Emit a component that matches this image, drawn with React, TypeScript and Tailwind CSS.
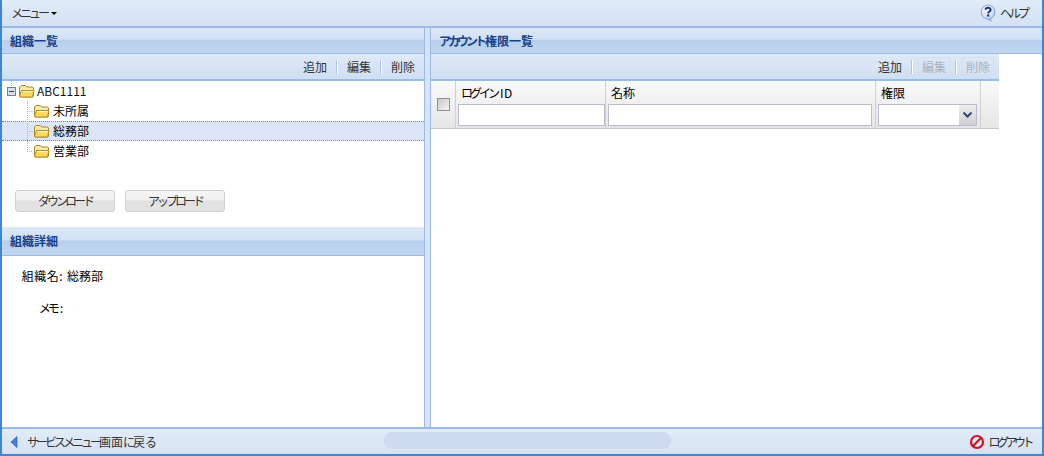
const font = { fontFamily: '"Noto Sans CJK JP", "Liberation Sans", sans-serif' };

function K({ children }: { children: string }) {
  return <span className="tracking-[-3px]">{children}</span>;
}

function Folder() {
  return (
    <svg width="17" height="14" viewBox="0 0 17 14" className="shrink-0">
      <path d="M1.5 12.5 V3 L3 1.5 H7.5 L9 3 H14.5 L15.5 4 V12 L14.5 13 H2 Z" fill="#f7e9a8" stroke="#a8862a" />
      <path d="M1.5 12.5 L3.5 6.5 H16 L14.5 13 H2 Z" fill="#fbd95c" stroke="#b08f2c" />
      <path d="M4.5 7.5 H14.5" stroke="#fff6c4" />
    </svg>
  );
}

function Head({ children, h = "h-[26px]" }: { children: React.ReactNode; h?: string }) {
  return (
    <div className={`${h} shrink-0 flex items-center pl-2 border-b border-[#99bbe8] bg-[linear-gradient(#dbe7f6_0%,#d2e1f4_45%,#b7cfec_50%,#c3d6ef_100%)]`}>
      <span className="text-[12px] font-bold text-[#15428b] leading-none">{children}</span>
    </div>
  );
}

function Tool({ label, disabled }: { label: string; disabled?: boolean }) {
  return (
    <span className={`text-[12px] leading-none ${disabled ? "text-[#aab2bd] outline outline-[#d3dfee] outline-offset-[3px]" : "text-[#333]"}`}>
      {label}
    </span>
  );
}

function Toolbar({ disabled }: { disabled?: boolean }) {
  const sep = <span className="w-px h-[14px] bg-[#a9c5ea] border-r border-white box-content" />;
  return (
    <div className="h-[27px] shrink-0 flex items-center justify-end gap-[9px] pr-[9px] border-b-2 border-[#99bbe8] bg-[linear-gradient(#dfe9f6,#cfdff3)]">
      <Tool label="追加" />
      {sep}
      <Tool label="編集" disabled={disabled} />
      {sep}
      <Tool label="削除" disabled={disabled} />
    </div>
  );
}

function TreeRow({ label, selected, last }: { label: string; selected?: boolean; last?: boolean }) {
  return (
    <div className={`h-[20px] flex items-center ${selected ? "bg-[#dce6f6] border-y border-dotted border-[#7d8796]" : ""}`}>
      <svg width="31" height="20" viewBox="0 0 31 20" className="shrink-0">
        <path d={last ? "M25.5 0 V10.5 H31" : "M25.5 0 V20 M25.5 10.5 H31"} stroke="#b5b5b5" strokeDasharray="1 1" fill="none" />
      </svg>
      <Folder />
      <span className="ml-[3px] text-[12px] text-black leading-none">{label}</span>
    </div>
  );
}

function Btn({ label }: { label: string }) {
  return (
    <div className="w-[100px] h-[22px] flex items-center justify-center rounded-[3px] border border-[#d0d0d0] text-[12px] text-[#333] bg-[linear-gradient(#f5f5f5_0%,#f0f0f0_45%,#e1e1e1_50%,#e3e3e3_100%)]">
      <K>{label}</K>
    </div>
  );
}

function FilterInput({ className }: { className: string }) {
  return <div className={`h-[22px] bg-white border border-[#b8bccb] ${className}`} />;
}

export default function App() {
  return (
    <div style={font} className="w-[1044px] h-[456px] flex flex-col overflow-hidden bg-white border-x-2 border-[#3c86d6]">
      <div className="h-[28px] shrink-0 flex items-center justify-between pl-2 pr-[15px] border-b-2 border-[#99bbe8] bg-[linear-gradient(#e1ebf8,#d4e1f3)]">
        <div className="flex items-center gap-[4px]">
          <span className="text-[12px] text-[#333] leading-none pl-[1px]"><K>メニュー</K></span>
          <span className="w-0 h-0 border-x-[3px] border-x-transparent border-t-[3px] border-t-black" />
        </div>
        <div className="flex items-center gap-[4px]">
          <svg width="16" height="18" viewBox="0 0 16 18">
            <defs>
              <radialGradient id="help" cx="0.4" cy="0.3" r="0.8">
                <stop offset="0" stopColor="#ffffff" />
                <stop offset="0.6" stopColor="#cfe0f7" />
                <stop offset="1" stopColor="#6f9ad8" />
              </radialGradient>
            </defs>
            <path d="M8 1 A7 7 0 0 1 10 14.7 L11.5 17 L7 14.9 A7 7 0 0 1 8 1 Z" fill="url(#help)" stroke="#86a6d4" />
            <path d="M5.6 5.8 C5.6 3 10.6 3 10.6 5.8 C10.6 7.7 8.2 7.4 8.2 9.4" fill="none" stroke="#17357f" strokeWidth="2" />
            <rect x="7.1" y="10.4" width="2.2" height="2.2" fill="#17357f" />
          </svg>
          <span className="text-[12px] text-[#333] leading-none"><K>ヘルプ</K></span>
        </div>
      </div>

      <div className="flex-1 min-h-0 flex">
        <div className="w-[423px] shrink-0 flex flex-col border-r border-[#99bbe8]">
          <Head>組織一覧</Head>
          <Toolbar />
          <div className="h-[146px] shrink-0 flex flex-col">
            <div className="h-[20px] flex items-center">
              <svg width="16" height="20" viewBox="0 0 16 20" className="shrink-0">
                <path d="M9.5 0 V6" stroke="#b5b5b5" strokeDasharray="1 1" />
                <rect x="5.5" y="6.5" width="8" height="8" fill="#d6deea" stroke="#6f7f99" />
                <path d="M7 10.5 H12" stroke="#27406e" />
              </svg>
              <Folder />
              <span className="ml-[2px] text-[12px] text-[#111] leading-none">ABC1111</span>
            </div>
            <TreeRow label="未所属" />
            <TreeRow label="総務部" selected />
            <TreeRow label="営業部" last />
            <div className="flex gap-[10px] pl-[13px] mt-[29px]">
              <Btn label="ダウンロード" />
              <Btn label="アップロード" />
            </div>
          </div>
          <Head h="h-[29px]">組織詳細</Head>
          <div className="flex-1 text-[12px] text-black">
            <div className="flex items-center h-[16px] mt-[12px]">
              <span className="w-[61px] text-right shrink-0 leading-none tracking-[0.5px]">組織名:</span>
              <span className="ml-[4px] leading-none">総務部</span>
            </div>
            <div className="flex items-center h-[16px] mt-[16px]">
              <span className="w-[61px] text-right shrink-0 leading-none"><K>メモ</K><span className="ml-[3px]">:</span></span>
            </div>
          </div>
        </div>

        <div className="w-[6px] shrink-0 bg-[#d8e4f5] border-r border-[#99bbe8]" />

        <div className="flex-1 min-w-0 flex flex-col">
          <Head><K>アカウント</K><span className="ml-[1px]">権限一覧</span></Head>
          <div className="w-[568px]">
            <Toolbar disabled />
            <div className="h-[48px] flex border-b border-[#c8c8c8] bg-[linear-gradient(#f9f9f9,#e6e6e6)] text-[12px] text-black">
              <div className="w-[25px] shrink-0 flex items-center justify-center border-r border-[#d0d0d0]">
                <span className="w-[13px] h-[13px] border border-[#8f8f8f] bg-[linear-gradient(135deg,#c9c9c9,#f4f4f4)]" />
              </div>
              <div className="w-[150px] shrink-0 flex flex-col pl-[2px] border-r border-[#d0d0d0]">
                <span className="h-[23px] flex items-center pl-[3px] leading-none">
                  <K>ログイン</K><span className="ml-[3px] tracking-[0.5px]">ID</span>
                </span>
                <FilterInput className="w-full" />
              </div>
              <div className="w-[270px] shrink-0 flex flex-col pl-[2px] pr-[3px] border-r border-[#d0d0d0]">
                <span className="h-[23px] flex items-center pl-[3px] leading-none">名称</span>
                <FilterInput className="w-full" />
              </div>
              <div className="w-[105px] shrink-0 flex flex-col px-[2px] border-r border-[#d0d0d0]">
                <span className="h-[23px] flex items-center pl-[3px] leading-none">権限</span>
                <div className="h-[22px] w-[99px] flex bg-white border border-[#b8bccb]">
                  <div className="flex-1" />
                  <div className="w-[17px] flex items-center justify-center bg-[linear-gradient(#eeeeee,#cfcfcf)]">
                    <svg width="9" height="6" viewBox="0 0 9 6">
                      <path d="M0.5 0.5 L4.5 4.5 L8.5 0.5" fill="none" stroke="#2c4a7c" strokeWidth="2" />
                    </svg>
                  </div>
                </div>
              </div>
            </div>
          </div>
        </div>
      </div>

      <div className="h-[29px] shrink-0 relative flex items-center justify-between pl-2 pr-[11px] border-t-2 border-[#99bbe8] border-b-2 border-b-[#3c86d6] bg-[linear-gradient(#e1ebf8,#d6e2f3)]">
        <div className="flex items-center gap-[9px]">
          <svg width="8" height="12" viewBox="0 0 8 12">
            <path d="M7 0.5 V11.5 L1 6 Z" fill="#3f7fd8" stroke="#2a5fb8" strokeWidth="0.7" />
          </svg>
          <span className="text-[12px] text-[#333] leading-none">
            <K>サービスメニュー</K><span>画面</span><span className="tracking-[-2px]">に</span><span>戻</span><span className="tracking-[-2px]">る</span>
          </span>
        </div>
        <div className="absolute left-[382px] top-[3px] w-[287px] h-[17px] rounded-[8px] bg-[#cedaed]" />
        <div className="flex items-center gap-[3px]">
          <svg width="16" height="16" viewBox="0 0 16 16">
            <circle cx="8" cy="8" r="6" fill="none" stroke="#d3121b" strokeWidth="2.2" />
            <path d="M3.8 12.2 L12.2 3.8" stroke="#d3121b" strokeWidth="2.2" />
          </svg>
          <span className="text-[12px] text-[#333] leading-none tracking-[-3.5px]">ログアウト</span>
        </div>
      </div>
    </div>
  );
}
